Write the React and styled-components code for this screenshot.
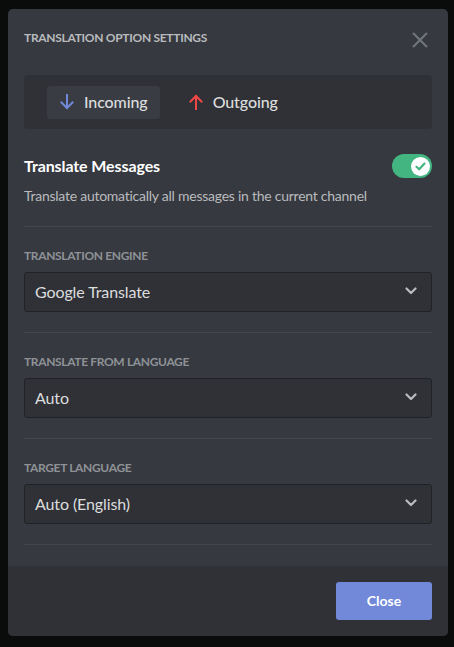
import React, { useState } from 'react';
import styled, { createGlobalStyle } from 'styled-components';

const GlobalStyle = createGlobalStyle`
  html, body {
    margin: 0;
    padding: 0;
    background: #0a0c0c;
  }
  body {
    font-family: Lato, "Open Sans", sans-serif;
    -webkit-font-smoothing: antialiased;
  }
  * {
    box-sizing: border-box;
  }
`;

const Backdrop = styled.div`
  width: 454px;
  height: 647px;
  padding: 9px 6px 11px 8px;
  background: #0a0c0c;
`;

const Modal = styled.div`
  width: 440px;
  height: 627px;
  background: #36393f;
  border-radius: 5px;
  display: flex;
  flex-direction: column;
  overflow: hidden;
`;

const Header = styled.div`
  height: 58px;
  padding: 0 16px;
  display: flex;
  align-items: center;
  justify-content: space-between;
`;

const Title = styled.h4`
  margin: 0;
  font-size: 12px;
  font-weight: 700;
  line-height: 16px;
  text-transform: uppercase;
  color: #b9bbbe;
  letter-spacing: -0.3px;
`;

const CloseIcon = styled.button`
  width: 24px;
  height: 24px;
  margin-top: 4px;
  padding: 0;
  border: 0;
  background: none;
  color: #72767d;
  display: flex;
  align-items: center;
  justify-content: center;
  cursor: pointer;
`;

const Body = styled.div`
  flex: 1;
  padding: 8px 16px 0;
`;

const TabBar = styled.div`
  height: 54px;
  background: #2f3136;
  border-radius: 4px;
  display: flex;
  align-items: center;
  gap: 16px;
  padding: 0 23px;
`;

const Tab = styled.div`
  height: 33px;
  padding: 0 12px 1px;
  border-radius: 3px;
  display: flex;
  align-items: center;
  gap: 9px;
  font-size: 16px;
  font-weight: 500;
  letter-spacing: -0.1px;
  color: #dcddde;
  background: ${p => (p.$active ? '#393c43' : 'transparent')};
`;

const SwitchRow = styled.div`
  margin-top: 25px;
  height: 24px;
  display: flex;
  align-items: center;
  justify-content: space-between;
`;

const SwitchTitle = styled.div`
  font-size: 16px;
  font-weight: 700;
  color: #ffffff;
  letter-spacing: -0.1px;
  padding-bottom: 1px;
`;

const Toggle = styled.div`
  width: 40px;
  height: 24px;
  border-radius: 12px;
  background: #43b581;
  display: flex;
  align-items: center;
  justify-content: flex-end;
  padding-right: 2px;
`;

const Knob = styled.div`
  width: 19px;
  height: 19px;
  border-radius: 50%;
  background: #ffffff;
  display: flex;
  align-items: center;
  justify-content: center;
`;

const Note = styled.div`
  margin-top: 8px;
  font-size: 14px;
  line-height: 20px;
  letter-spacing: -0.25px;
  color: #b9bbbe;
`;

const Divider = styled.div`
  height: 1px;
  margin-top: 20px;
  background: #42454a;
`;

const Section = styled.div`
  padding-top: 21px;
`;

const Label = styled.h5`
  margin: 0 0 8px;
  font-size: 12px;
  font-weight: 700;
  line-height: 16px;
  letter-spacing: -0.35px;
  text-transform: uppercase;
  color: #8e9297;
`;

const Select = styled.div`
  height: 40px;
  border: 1px solid #202225;
  border-radius: 3px;
  background: #2f3136;
  display: flex;
  align-items: center;
  justify-content: space-between;
  padding: 0 14px 2px 10px;
  font-size: 16px;
  letter-spacing: -0.1px;
  color: #dcddde;
`;

const Footer = styled.div`
  height: 70px;
  background: #2f3136;
  padding: 16px;
  display: flex;
  justify-content: flex-end;
  align-items: center;
`;

const Button = styled.button`
  width: 96px;
  height: 38px;
  border: 0;
  border-radius: 3px;
  padding: 0 0 2px;
  background: #7289da;
  color: #ffffff;
  font-family: inherit;
  font-size: 14px;
  font-weight: 700;
  cursor: pointer;
`;

const Arrow = ({ up, color }) => (
  <svg width="16" height="16" viewBox="0 0 16 16" fill="none" stroke={color} strokeWidth="2" strokeLinecap="square">
    {up ? (
      <>
        <path d="M8 15V2" />
        <path d="M2.5 7.5L8 2l5.5 5.5" />
      </>
    ) : (
      <>
        <path d="M8 1v13" />
        <path d="M2.5 8.5L8 14l5.5-5.5" />
      </>
    )}
  </svg>
);

const Chevron = () => (
  <svg width="12" height="8" viewBox="0 0 12 8" fill="none" stroke="#b9bbbe" strokeWidth="2.2" strokeLinecap="round" strokeLinejoin="round">
    <path d="M1.5 1.5L6 6l4.5-4.5" />
  </svg>
);

const fields = [
  { label: 'Translation Engine', value: 'Google Translate' },
  { label: 'Translate from Language', value: 'Auto' },
  { label: 'Target Language', value: 'Auto (English)' },
];

export default function App() {
  const [tab, setTab] = useState('in');

  return (
    <>
      <GlobalStyle />
      <Backdrop>
        <Modal>
          <Header>
            <Title>Translation Option Settings</Title>
            <CloseIcon aria-label="Close">
              <svg width="16" height="16" viewBox="0 0 16 16" stroke="currentColor" strokeWidth="2">
                <path d="M1 1l14 14M15 1L1 15" />
              </svg>
            </CloseIcon>
          </Header>
          <Body>
            <TabBar>
              <Tab $active={tab === 'in'} onClick={() => setTab('in')}>
                <Arrow color="#7289da" />
                Incoming
              </Tab>
              <Tab $active={tab === 'out'} onClick={() => setTab('out')}>
                <Arrow up color="#f04747" />
                Outgoing
              </Tab>
            </TabBar>

            <SwitchRow>
              <SwitchTitle>Translate Messages</SwitchTitle>
              <Toggle>
                <Knob>
                  <svg width="11" height="9" viewBox="0 0 11 9" fill="none" stroke="#43b581" strokeWidth="2.2" strokeLinecap="round" strokeLinejoin="round">
                    <path d="M1.5 4.8L4.2 7.3 9.5 1.6" />
                  </svg>
                </Knob>
              </Toggle>
            </SwitchRow>
            <Note>Translate automatically all messages in the current channel</Note>
            <Divider />

            {fields.map(f => (
              <Section key={f.label}>
                <Label>{f.label}</Label>
                <Select>
                  {f.value}
                  <Chevron />
                </Select>
                <Divider />
              </Section>
            ))}
          </Body>
          <Footer>
            <Button>Close</Button>
          </Footer>
        </Modal>
      </Backdrop>
    </>
  );
}
